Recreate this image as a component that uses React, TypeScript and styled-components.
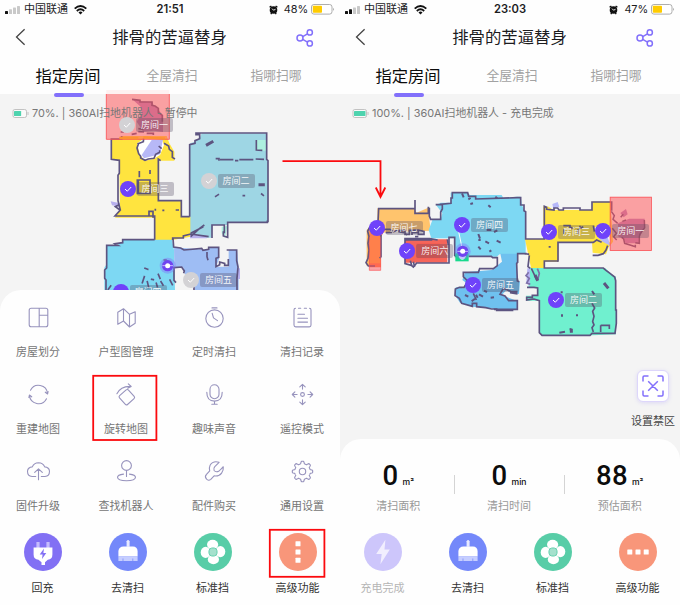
import React from 'react';
import styled, { createGlobalStyle } from 'styled-components';

const GlobalStyle = createGlobalStyle`
  * { box-sizing: border-box; }
  body {
    margin: 0;
    background: #fff;
    font-family: Inter, "Noto Sans CJK SC", sans-serif;
    color: #1c1c1e;
  }
`;

const ACCENT = '#8270fb';
const WALL = '#5d5480';
const LINE = '#9793bd';

/* ---------- layout ---------- */

const Board = styled.main`
  position: relative;
  display: flex;
  width: 680px;
  height: 605px;
  overflow: hidden;
`;

const Phone = styled.section`
  display: flex;
  flex-direction: column;
  width: 340px;
  height: 605px;
  background: #f4f4f4;
`;

const Header = styled.header`
  flex: none;
  height: 94px;
  background: #fefefe;
`;

const StatusBar = styled.div`
  display: grid;
  grid-template-columns: 1fr auto 1fr;
  align-items: center;
  height: 19px;
  padding: 0 5px;
  font-size: 11px;
  line-height: 19px;
`;

const StatusGroup = styled.div<{ $end?: boolean }>`
  display: flex;
  align-items: center;
  gap: 3px;
  justify-content: ${(p) => (p.$end ? 'flex-end' : 'flex-start')};
`;

const Carrier = styled.span`
  width: 47px;
  font-size: 11px;
  white-space: nowrap;
`;

const Clock = styled.span`
  font-size: 11.2px;
  font-weight: 600;
`;

const Percent = styled.span`
  margin-left: 3px;
  font-size: 10.9px;
  letter-spacing: -0.1px;
`;

const TitleRow = styled.div`
  display: grid;
  grid-template-columns: 48px 1fr 48px;
  align-items: center;
  height: 36px;
  padding: 0 1px 0 0;
`;

const BackIcon = styled.svg`
  margin: -1px 0 0 15px;
`;

const ShareIcon = styled.svg`
  margin: 2px 0 0 5px;
`;

const Title = styled.h1`
  margin: 0;
  text-align: center;
  font-size: 16.4px;
  font-weight: 400;
  line-height: 36px;
`;

const Tabs = styled.nav`
  display: grid;
  grid-template-columns: 104px 104px 104px;
  height: 42px;
  padding-left: 16px;
`;

const Tab = styled.div<{ $active?: boolean }>`
  display: flex;
  flex-direction: column;
  align-items: center;
  height: 42px;
  font-size: ${(p) => (p.$active ? '16.3px' : '12.8px')};
  color: ${(p) => (p.$active ? '#0c0c0c' : '#a2a2a2')};
  line-height: 42px;
`;

const TabLine = styled.i`
  position: relative;
  z-index: 2;
  flex: none;
  width: 30px;
  height: 4px;
  margin: -4px 0 0 2px;
  border-radius: 2px;
  background: ${ACCENT};
`;

const MapArea = styled.div<{ $height: number }>`
  position: relative;
  flex: none;
  height: ${(p) => p.$height}px;
`;

const MapSvg = styled.svg`
  position: absolute;
  left: 0;
  top: 0;
  overflow: visible;
`;

const RobotState = styled.div`
  position: relative;
  display: flex;
  align-items: center;
  gap: 3px;
  height: 18px;
  margin: 10px 0 0 12px;
  color: #777;
  font-size: 10.9px;
  line-height: 18px;
  white-space: nowrap;
`;

const Pin = styled.div<{ $x: number; $y: number }>`
  position: absolute;
  left: ${(p) => p.$x - 8}px;
  top: ${(p) => p.$y - 8}px;
  display: flex;
  align-items: center;
  height: 16px;
`;

const PinLabel = styled.span`
  width: 37px;
  height: 14px;
  border-radius: 2px;
  background: rgba(85, 75, 100, 0.32);
  color: rgba(255, 255, 255, 0.92);
  font-size: 9px;
  line-height: 14px;
  text-align: center;
  white-space: nowrap;
`;

const Panel = styled.div`
  position: relative;
  display: flex;
  flex-direction: column;
  flex: 1;
  border-radius: 21px 21px 0 0;
  background: #fefefe;
`;

const Features = styled.div`
  display: grid;
  grid-template-columns: repeat(4, 64px);
  grid-auto-rows: 77px;
  column-gap: 24px;
  height: 234px;
  padding: 15px 6px 0;
`;

const Feature = styled.div`
  display: flex;
  flex-direction: column;
  align-items: center;
  gap: 12px;
  color: #757575;
  font-size: 11px;
  line-height: 20px;
  white-space: nowrap;
`;

const Actions = styled.div`
  display: grid;
  grid-template-columns: repeat(4, 85px);
  height: 72px;
  margin-top: auto;
`;

const Action = styled.div<{ $muted?: boolean }>`
  display: flex;
  flex-direction: column;
  align-items: center;
  gap: 7px;
  color: ${(p) => (p.$muted ? '#b5b5b5' : '#333')};
  font-size: 11px;
  line-height: 20px;
`;

const Stats = styled.div`
  display: grid;
  grid-template-columns: repeat(3, 1fr);
  height: 84px;
  padding: 20px 5px 0 3px;
`;

const Stat = styled.div`
  display: flex;
  flex-direction: column;
  align-items: center;
  color: #999;
  font-size: 11px;
  line-height: 20px;

  & + & {
    background: linear-gradient(#d4d4d4, #d4d4d4) no-repeat 0 16px / 1px 19px;
  }
`;

const StatValue = styled.div`
  display: flex;
  align-items: baseline;
  gap: 4px;
  height: 37px;
  color: #0c0c0c;
  font-family: Roboto, sans-serif;
  font-size: 27.5px;
  font-weight: 500;
  letter-spacing: 0.4px;
  line-height: 33px;
`;

const Unit = styled.small`
  font-family: Inter, sans-serif;
  font-size: 8.6px;
  font-weight: 500;
  letter-spacing: 0;
`;

const ZoneTool = styled.div`
  position: absolute;
  right: 5px;
  top: 276px;
  display: flex;
  flex-direction: column;
  align-items: center;
  gap: 9px;
  color: #444;
  font-size: 11px;
  line-height: 20px;
`;

const ZoneButton = styled.div`
  display: grid;
  place-items: center;
  width: 32px;
  height: 32px;
  border: 1px solid #ddd6fb;
  border-radius: 6px;
  background: #fff;
  box-shadow: 0 1px 4px rgba(130, 112, 251, 0.2);
`;

const Annotations = styled.svg`
  position: absolute;
  inset: 0;
  pointer-events: none;
`;

/* ---------- status icons ---------- */

const Signal = ({ bars }: { bars: number }) => (
  <svg width="16" height="10" viewBox="0 0 16 10">
    {[0, 1, 2, 3].map((i) => (
      <rect key={i} x={i * 4} y={6 - i * 1.7} width="3" height={3 + i * 1.7} rx=".6" fill={i < bars ? '#111' : '#c9c9c9'} />
    ))}
  </svg>
);

const Wifi = () => (
  <svg width="13" height="10" viewBox="0 0 13 10" fill="none" stroke="#111" strokeWidth="1.9">
    <path d="M.7 3.6Q6.5-1.4 12.3 3.6M2.8 5.9Q6.5 2.8 10.2 5.9" />
    <path d="M4.5 7.4Q6.5 5.8 8.5 7.4L6.5 9.6Z" fill="#111" stroke="none" />
  </svg>
);

const Alarm = () => (
  <svg width="9" height="10" viewBox="0 0 9 10">
    <circle cx="4.5" cy="5" r="3.8" fill="#111" />
    <path d="M.6 2.3L2.4.9M8.4 2.3L6.6.9M1.8 9.1L2.7 7.8M7.2 9.1L6.3 7.8" stroke="#111" strokeWidth="1.3" />
    <path d="M3 3.6L4.5 5.2L6.5 4.3" fill="none" stroke="#fff" strokeWidth=".9" />
  </svg>
);

const PhoneBattery = () => (
  <svg width="24" height="11" viewBox="0 0 24 11">
    <rect x=".5" y=".5" width="20.5" height="9.6" rx="2.4" fill="#fff" stroke="#999" strokeWidth=".8" />
    <rect x="1.8" y="1.8" width="9.2" height="7" rx=".8" fill="#fc0" />
    <path d="M22.2 3.7Q24 5.3 22.2 6.9Z" fill="#999" />
  </svg>
);

const RobotBattery = ({ level }: { level: number }) => (
  <svg width="17" height="9" viewBox="0 0 17 9">
    <rect x="1" y=".5" width="13.5" height="8" rx="1.8" fill="#fafafa" stroke="#bbb" strokeWidth=".9" />
    <rect x="2" y="2" width={11.5 * level} height="5" rx=".6" fill="#4ed3ae" />
    <path d="M16 3v3" stroke="#bbb" strokeWidth=".9" />
  </svg>
);

/* ---------- feature icons, drawn round their own centre ---------- */

const Glyph = ({ children }: { children: React.ReactNode }) => (
  <svg width="25" height="25" viewBox="-12.5 -12.5 25 25" fill="none" stroke={LINE} strokeWidth="1.1" strokeLinecap="round" strokeLinejoin="round">
    {children}
  </svg>
);

const gearPath = (() => {
  const points: string[] = [];
  const steps = 160;
  for (let i = 0; i < steps; i++) {
    const angle = (i / steps) * Math.PI * 2;
    const wave = Math.max(-1, Math.min(1, Math.cos(angle * 8) * 1.9 - 0.25));
    const radius = 9 + wave * 1.2;
    points.push(`${(Math.cos(angle) * radius).toFixed(2)} ${(Math.sin(angle) * radius).toFixed(2)}`);
  }
  return `M${points.join('L')}Z`;
})();

const features: [string, React.ReactNode][] = [
  ['房屋划分', <path d="M-7.3-9.3H7.3Q9.3-9.3 9.3-7.3V7.3Q9.3 9.3 7.3 9.3H-7.3Q-9.3 9.3-9.3 7.3V-7.3Q-9.3-9.3-7.3-9.3ZM.7-9.3V9.3M.7-2.3H9.3" />],
  ['户型图管理', <path d="M-8.7-5.2L-3-8.8L3-3.2L8.7-5.8V5.8L3 9.5L-3 3.5L-8.7 6.8ZM-3-8.8V3.5M3-3.2V9.5" />],
  ['定时清扫', <><circle cy="1.1" r="8.7" /><path d="M-2.5-9.6H2.5M-2.3-4.2L-1 .4L3 3.1" /></>],
  ['清扫记录', <path d="M-7-9.2Q-8.5-9.2-8.5-7.6V7.6Q-8.5 9.4-6.8 9.4H6.8Q8.5 9.4 8.5 7.6V-7.6Q8.5-9.2 7-9.2M-4-9.2H-1.8M1.8-9.2H4M-4.6-3.2H2M-4.6.8H5M-4.6 4.6H5" />],
  ['重建地图', <path d="M-8-4.2A9 9 0 0 1 9-.8M6.8-2.3L9.1-.5L9.6-3M8 4.2A9 9 0 0 1-9 .8M-9.6 3L-9.1.5L-6.8 2.3" />],
  ['旋转地图', <><rect x="-5.9" y="-5.7" width="11.8" height="11.8" rx="1.5" transform="translate(.2 2.5) rotate(-42)" /><path d="M-9.6-.8Q-5.5-8.7 4.4-8.1M1.8-10.7L4.7-8L1.2-6.3" /></>],
  ['趣味声音', <><rect x="-4.5" y="-9.7" width="9" height="14" rx="4.5" /><path d="M-7.7-2.3Q-7.7 6.6 0 6.6Q7.7 6.6 7.7-2.3M0 6.8V9.7M-2.7 9.8H2.7" /></>],
  ['遥控模式', <><circle r="1.9" /><path d="M0-5.4V-10M-2.7-7.6L0-10.2L2.7-7.6M0 5.4V10M-2.7 7.6L0 10.2L2.7 7.6M-5.4 0H-10M-7.6-2.7L-10.2 0L-7.6 2.7M5.4 0H10M7.6-2.7L10.2 0L7.6 2.7" /></>],
  ['固件升级', <path d="M-2.8 5H-6.5Q-11 4.7-11-.3Q-10.7-4.2-6.2-4.6Q-4.6-8.7 0-8.8Q4.6-8.7 6.2-4.6Q10.7-4.2 11-.3Q11 4.7 6.5 5H2.8M0 8.3V-2M-3.8.9L0-2.7L3.8.9" />],
  ['查找机器人', <><circle cy="-6" r="4.9" /><path d="M0-1V5M-3 2.6Q-9 3.3-9 5.8Q-8.7 9.2 0 9.2Q8.7 9.2 9 5.8Q9 3.3 3 2.6" /></>],
  ['配件购买', <path d="M4.6-9.2Q-1.5-11-4.4-6.3Q-5.7-3.6-4.8-.7L-8 2.9Q-10.2 5.2-8 7.5Q-6 9.8-3.7 7.8L-.4 4.4Q4.4 5.2 7.1 1.6Q9.2-1.2 8.8-4.8Q6.8-2.3 4.6-.6Q1.4 1.2-.4-1Q-1.3-3 .3-4.8Z" />],
  ['通用设置', <><path d={gearPath} /><circle r="3.2" /></>],
];

/* ---------- bottom action icons ---------- */

const Disc = ({ color, children }: { color: string; children: React.ReactNode }) => (
  <svg width="38" height="38" viewBox="-19 -19 38 38">
    <circle r="19" fill={color} />
    {children}
  </svg>
);

const PlugIcon = () => (
  <Disc color="#8270f4">
    <path d="M-6.6-10H-3.4V-4H-6.6ZM3.4-10H6.6V-4H3.4Z" fill="#c5bcfd" />
    <path d="M-9.4-4.6H9.4V2.5Q9.4 7.5 4.8 7.8L2 10.3V13H-1.5V10.3L-4.5 7.8Q-9.4 7.5-9.4 2.5Z" fill="#fff" />
    <path d="M1-3.4L-3.3 2.4H-.4L-1 7L3.3.9H.4Z" fill="#8270f4" />
  </Disc>
);

const BoltIcon = () => (
  <Disc color="#cdc6fb">
    <path d="M2.4-12.3L-6.8 2H-1.3L-2.6 12.3L6.8-2.6H1.5Z" fill="#f1eefe" />
  </Disc>
);

const BrushIcon = () => (
  <Disc color="#7488fa">
    <path d="M-1.4-10.8Q0-13.4 1.6-10.8V-5.2H-1.4Z" fill="#e7eaff" />
    <path d="M-9.6 4.6V-1Q-9-5.3-4.5-5.5H5Q9.2-5.3 9.6-1V4.6Z" fill="#fff" />
    <path d="M-9.6 4.6H9.6V9H-9.6Z" fill="#c6ceff" />
    <path d="M-5 6.5V9M4.8 6.5V9" stroke="#8b9bfb" />
  </Disc>
);

const FanIcon = () => (
  <Disc color="#58cda7">
    {[0, 90, 180, 270].map((a) => (
      <ellipse key={a} transform={`rotate(${a})`} cx="-.4" cy="-7.4" rx="5.6" ry="4.9" fill="#fff" />
    ))}
    <circle r="4.1" fill="#a4e1cd" stroke="#58cda7" strokeWidth=".9" />
  </Disc>
);

const MoreIcon = ({ vertical }: { vertical?: boolean }) => (
  <Disc color="#f8967a">
    <g transform={vertical ? 'rotate(90)' : undefined} fill="#fff">
      {[-8.2, 0, 8.2].map((x) => <rect key={x} x={x - 2.5} y="-2.5" width="5" height="5" rx=".5" />)}
    </g>
  </Disc>
);

/* ---------- maps ---------- */

type Room = { name: string; x: number; y: number; off?: boolean };

const RoomPin = ({ name, x, y, off }: Room) => (
  <Pin $x={x} $y={y}>
    <svg width="17" height="16" viewBox="0 0 17 16">
      <circle cx="8" cy="8" r="8" fill={off ? '#d3d2d5' : '#6f42fa'} />
      <path d="M5 8L7.3 10.2L11.2 6" fill="none" stroke="#fff" strokeWidth="1" />
    </svg>
    <PinLabel>{name}</PinLabel>
  </Pin>
);

const RobotMark = ({ x, y }: { x: number; y: number }) => (
  <g transform={`translate(${x} ${y})`}>
    <circle r="24" fill="#8270fb" opacity=".4" />
    <circle r="17" fill="#7044f0" />
    <path d="M-16 0H16" stroke="#c9baff" strokeWidth="3" />
    <circle r="7.5" fill="#fff" />
  </g>
);

const PausedMap = () => (
  <MapSvg width="340" height="196" viewBox="0 94 340 196">
    <defs><clipPath id="paused"><rect x="0" y="90" width="340" height="200" /></clipPath></defs>
    <g clipPath="url(#paused)">
      <g transform="translate(90 90) scale(.33333)" strokeLinejoin="miter">
        <path fill="#9ed6e4" d="M300 160L315 155L330 142L335 130H530V208L534 212V396H412V405H368L364 443H300Z" />
        <path fill="#ffe43f" d="M65 147H92V138H230L238 160L253 185V212H208V332H273V380H301V440L248 450H195V383H75L90 358L88 210H65Z" />
        <path fill="#7dd8f3" d="M50 466H85V459H98V449H246L252 480L255 600H43V533L50 522Z" />
        <path fill="#9ebdf4" d="M252 472L355 480L360 472H386L388 505L378 530H416V480H441L446 535V600H315V570L285 553L280 533L253 531Z" />
        <path fill="#fff" d="M142 160L160 147H215L222 165L210 195L190 207L165 212L148 193Z" />
        <path fill="#b7b8f7" d="M185 150L219 148L210 193L162 205L155 195Z" />
        <path fill="#b8b0ee" d="M62 334L90 340L88 350L66 346ZM440 535H450V567H440ZM300 434L350 436V445H300Z" />
        <path fill="#adf0df" d="M497 150H530V182H497ZM395 410L412 408L405 443L395 430Z" />
        <g fill="none" stroke={WALL} strokeWidth="5">
          <path d="M299 380V164L315 160V152L329 146V134L318 134V129H530V208L534 212V394H532V397H413V442L400 438V424M366 444V405H403V430M302 440L328 416L343 405M302 430L340 410" />
          <path d="M299 380H274V332H205V207L212 212M64 147H95V138M64 145V208L88 211V250L84 256V332L91 360L75 378H194V449M194 381H189V364H177V380M206 168L215 176M222 160L236 168L238 178L247 185V202L255 207M86 345L76 350L90 360" />
          <path d="M146 160L141 174L146 191L152 199V204L165 211L175 207L192 205L197 193L209 187V181M142 162L160 155L161 146" />
          <path d="M248 450V444H280V438L302 432L356 440M249 445L251 471L272 474L282 480L335 475L339 481L356 478V472H386V502L378 505V530L389 524V516L404 520V526H415V507M410 480H440V512L444 531L441 565V600M252 533L275 531L283 543L281 550M312 600V580" />
          <path d="M194 449H98V458L75 461L84 466H50V534L44 540V565L48 570V600M252 530V571L258 578" />
          <path d="M142 270H180V310H142ZM145 272V312M499 150V180L517 181M377 206H387V212M390 209H430M435 212H445M448 209H490M497 207L522 208" />
          <path d="M148 243V262M180 240V252M196 356V362M217 361H223M257 360H267M351 486V500L354 511" />
        </g>
        <g stroke={WALL} strokeWidth="9" fill="none" strokeLinecap="square">
          <path d="M352 164L366 156M510 284H520" />
          <path strokeWidth="5" d="M377 319L385 314M460 317H463M515 312L520 316M165 535L173 538M185 568L190 569M205 553L210 565M163 560L157 578M172 575L176 592M199 580L202 590M213 575L219 585M240 570L247 584M62 588L55 598M223 510H228" />
        </g>
        <path fill="#9a5eae" opacity=".7" d="M126 27L150 34L188 37L190 46L204 56L219 78V126L192 122L160 125L140 95L155 70L152 50Z" />
        <path fill="none" stroke={WALL} strokeWidth="5" d="M126 28L150 31V36H186V46L195 48L205 55V67L217 76V95M145 125L162 126M170 130H190V135M145 116L160 118M92 126H102M125 133L140 130" />
        <rect x="49" y="0" width="189" height="12" fill="#ff5757" opacity=".08" />
        <rect x="49" y="12" width="189" height="136" fill="#ff5257" opacity=".52" />
        <path d="M49 12V148H238V12" fill="none" stroke="#fb5357" strokeWidth="2.5" />
        <path stroke="#fc9232" strokeWidth="7" d="M88 144H145M160 142L225 146" />
        <RobotMark x={233} y={527} />
      </g>
    </g>
  </MapSvg>
);

const RotatedMap = () => (
  <MapSvg width="340" height="345" viewBox="340 94 340 345">
    <g transform="translate(350 180) scale(.33333)">
      <path fill="#ffc46d" d="M82 85H192L200 98L238 82V118L242 152L90 158L83 150Z" />
      <path fill="#ffbc5e" d="M50 150L62 138V258H50Z" />
      <path fill="#ff804b" d="M58 140L80 132L105 150L93 170V262H57Z" />
      <path fill="#7dd8f3" d="M258 75L272 68H303L302 38L350 36L360 45H455L460 54L500 50H512L516 76L527 98V222H450L440 230H314V175H244L236 150L248 118H272L277 100Z" />
      <path fill="#6fc1ef" d="M451 221H503V247L500 250L502 300L510 305L507 342L480 338L470 330L455 345L502 363V390L443 392L425 385L367 380L330 368L315 345L317 322L340 325L348 308L337 300L345 277L425 270L456 245Z" />
      <path fill="#f5655a" d="M165 178H292V248H165Z" />
      <path fill="#ff4b3e" d="M200 190H270V235H200Z" opacity=".4" />
      <path fill="#ffe43f" d="M525 177L580 177V79L596 80L610 90H725L728 65H783V95L789 185L776 202L768 223L728 218L726 187H625V245H583V268H544Z" />
      <path fill="#f2f2fa" d="M728 140L775 145L782 188L757 180Z" />
      <path fill="#b6b8f9" d="M740 168L773 172L782 198L758 185ZM607 72L623 66L628 80L610 86Z" />
      <path fill="#70f0cf" d="M541 264H765L788 285L798 290V463L730 466H574L568 458V362H530L528 347H562V323H535Z" />
      <path fill="#b7b5f4" d="M532 265H540V318L529 308Z" />
      <g fill="none" stroke={WALL} strokeWidth="5">
        <path d="M83 147L86 86H195V60M195 86V100H235V80M238 83V108L242 118H272V96L277 87V74H257M270 73L303 70V54H307V38H353L356 49H377V57L502 53H512V75H522V92L527 95V177H583V79L590 82V88L612 90V84H623L627 90H640V84H690V90H726V66H785V92" />
        <path d="M314 228V172H297V249H200L190 261L184 256L165 251V176H240L263 180M165 180H247M314 229H330M356 229H424L428 233H442V257L430 266H389L385 277H340V290L350 300V309L342 322H328L316 327L315 347L328 355L335 370L367 379V370H380V380L407 383L425 387H440V391H490" />
        <path d="M527 222L530 221H503V247L500 250L502 303L508 305M480 338L500 341V335H485L460 325L450 343L465 348L476 362H502V388L432 388M524 222H535V225" />
        <path d="M624 243H583V264H760L768 271L780 280L794 291L797 302V390H799V430L795 460H726L720 466H576L568 458V362L552 357L530 360V352H547V346H563V324L552 322H531M538 226L534 260L541 265M544 265L562 303" />
        <path d="M624 245V187H730L740 180L755 187M773 197L768 210L760 221L744 226L728 226M730 137L733 155" />
        <path d="M60 140L53 153L57 170L54 190L57 210L54 235L48 248L55 258H75M93 165V230L89 235" />
        <path d="M102 148H120L130 155L145 151H165V163H178V151L205 150L222 154V163H205V153M107 158L126 157M145 155L163 158L171 165M186 165V158H205M195 170H205M292 178L295 195M181 242L185 256M190 245L194 260M370 340L379 360" />
        <path d="M562 266L568 280L562 303M536 277L528 287L538 295L530 309L541 313" stroke="#7e70a8" />
        <path d="M752 436H778V447M752 436V456M726 370L734 384L728 394L732 409L728 425L732 435L726 443L730 456" />
        <path d="M640 137H660V145M665 140V148M690 137V145L700 140M684 148V162M642 148V162" />
      </g>
      <g stroke={WALL} strokeWidth="6" fill="none">
        <path d="M336 40L341 52M355 58L362 54M385 162L390 176M385 200L392 208M415 76L422 82M436 50L442 55M410 150H424M432 156L442 151M440 182L452 188M406 184L417 190M418 215L424 211M385 180H392M361 72L369 70M636 403V410M681 403V409M599 198V203M628 458L645 455M661 445L664 456M726 333L733 343M635 334V340" />
        <path strokeWidth="9" d="M762 309L775 325M664 446V458M555 285L563 302" />
        <path d="M387 343L399 350M402 332L411 336M422 353L432 352M345 345L355 350M365 364L375 356M378 344L383 353" />
      </g>
      <path fill="#9a5eae" opacity=".7" d="M811 99L828 87L833 103L821 112ZM804 130L817 124L838 116H884V145L868 172V190H828L819 175L805 170Z" />
      <path fill="none" stroke={WALL} strokeWidth="4.5" d="M784 94L793 107L789 118L803 130M817 124L828 120M883 120L884 143L875 155L870 162L868 170V190L856 188M856 194V200L840 195L824 190L821 177L815 172M787 145L799 160L791 170L800 180M820 103L812 112" />
      <rect x="780" y="51" width="124" height="161" fill="#ff5257" opacity=".52" />
      <rect x="780.5" y="51.5" width="124" height="160" fill="none" stroke="#fb575b" strokeWidth="2.5" />
      <path d="M58 250H92V271H58Z" fill="#ff5257" opacity=".5" />
      <path d="M58 170V271H92V170" fill="none" stroke="#fb575b" strokeWidth="2" />
      <path d="M326 155L335 198" stroke="#fff" strokeWidth="3" />
      <rect x="316" y="220" width="40" height="24" fill="#18d98d" />
      <path d="M326 228H348Q345 239 336 239Q328 238 326 228Z" fill="#efffff" />
      <RobotMark x={338} y={214} />
    </g>
  </MapSvg>
);

/* ---------- screens ---------- */

const AppHeader = ({ time, charge, bars }: { time: string; charge: string; bars: number }) => (
  <Header>
    <StatusBar>
      <StatusGroup><Signal bars={bars} /><Carrier>中国联通</Carrier><Wifi /></StatusGroup>
      <Clock>{time}</Clock>
      <StatusGroup $end><Alarm /><Percent>{charge}</Percent><PhoneBattery /></StatusGroup>
    </StatusBar>
    <TitleRow>
      <BackIcon width="12" height="18" viewBox="0 0 12 18" fill="none" stroke="#444" strokeWidth="1.3"><path d="M9.6 1.2L1.5 9L9.6 16.8" /></BackIcon>
      <Title>排骨的苦逼替身</Title>
      <ShareIcon width="18" height="18" viewBox="0 0 18 18" fill="none" stroke={ACCENT} strokeWidth="1.5">
        <circle cx="4" cy="9" r="3" /><circle cx="13.8" cy="3.4" r="2.6" /><circle cx="13.8" cy="14.4" r="2.6" />
        <path d="M6.7 7.6L11.5 4.8M6.7 10.4L11.5 13.1" />
      </ShareIcon>
    </TitleRow>
    <Tabs>
      <Tab $active>指定房间<TabLine /></Tab>
      <Tab>全屋清扫</Tab>
      <Tab>指哪扫哪</Tab>
    </Tabs>
  </Header>
);

const pausedRooms: Room[] = [
  { name: '房间一', x: 127, y: 30.5, off: true },
  { name: '房间二', x: 208.5, y: 86.5, off: true },
  { name: '房间三', x: 127.5, y: 94.5 },
  { name: '房间五', x: 191, y: 185.5, off: true },
  { name: '房间四', x: 120.5, y: 198 },
];

const rotatedRooms: Room[] = [
  { name: '房间七', x: 36.5, y: 133.5 },
  { name: '房间六', x: 67.3, y: 157 },
  { name: '房间四', x: 122, y: 131 },
  { name: '房间五', x: 133, y: 191 },
  { name: '房间三', x: 209, y: 137.5 },
  { name: '房间一', x: 263.3, y: 136.5 },
  { name: '房间二', x: 216, y: 206 },
];

export default function App() {
  return (
    <Board>
      <GlobalStyle />
      <Phone>
        <AppHeader time="21:51" charge="48%" bars={1} />
        <MapArea $height={196}>
          <PausedMap />
          <RobotState><RobotBattery level={0.62} />70%. | 360AI扫地机器人 - 暂停中</RobotState>
          {pausedRooms.map((room) => <RoomPin key={room.name} {...room} />)}
        </MapArea>
        <Panel>
          <Features>
            {features.map(([label, icon]) => (
              <Feature key={label}><Glyph>{icon}</Glyph>{label}</Feature>
            ))}
          </Features>
          <Actions>
            <Action><PlugIcon />回充</Action>
            <Action><BrushIcon />去清扫</Action>
            <Action><FanIcon />标准挡</Action>
            <Action><MoreIcon vertical />高级功能</Action>
          </Actions>
        </Panel>
      </Phone>
      <Phone>
        <AppHeader time="23:03" charge="47%" bars={2} />
        <MapArea $height={345}>
          <RotatedMap />
          <RobotState><RobotBattery level={1} />100%. | 360AI扫地机器人 - 充电完成</RobotState>
          {rotatedRooms.map((room) => <RoomPin key={room.name} {...room} />)}
          <ZoneTool>
            <ZoneButton>
              <svg width="22" height="22" viewBox="0 0 22 22" fill="none" stroke={ACCENT} strokeWidth="1.5">
                <path d="M1 6.5V2.2Q1 1 2.2 1H6.5M15.5 1H19.8Q21 1 21 2.2V6.5M21 15.5V19.8Q21 21 19.8 21H15.5M6.5 21H2.2Q1 21 1 19.8V15.5M6.2 6.2L15.8 15.8M15.8 6.2L6.2 15.8" />
              </svg>
            </ZoneButton>
            设置禁区
          </ZoneTool>
        </MapArea>
        <Panel>
          <Stats>
            <Stat><StatValue>0<Unit>m²</Unit></StatValue>清扫面积</Stat>
            <Stat><StatValue>0<Unit>min</Unit></StatValue>清扫时间</Stat>
            <Stat><StatValue>88<Unit>m²</Unit></StatValue>预估面积</Stat>
          </Stats>
          <Actions>
            <Action $muted><BoltIcon />充电完成</Action>
            <Action><BrushIcon />去清扫</Action>
            <Action><FanIcon />标准挡</Action>
            <Action><MoreIcon />高级功能</Action>
          </Actions>
        </Panel>
      </Phone>
      <Annotations width="680" height="605" fill="none" stroke="#fb0a0e" strokeWidth="1.8">
        <rect x="93.2" y="375.8" width="63.2" height="64.2" />
        <rect x="269.8" y="529.8" width="54.6" height="47" />
        <path d="M282.5 161.2H380.5V196M375.8 187.5L380.5 197L385.3 187.5" />
      </Annotations>
    </Board>
  );
}
